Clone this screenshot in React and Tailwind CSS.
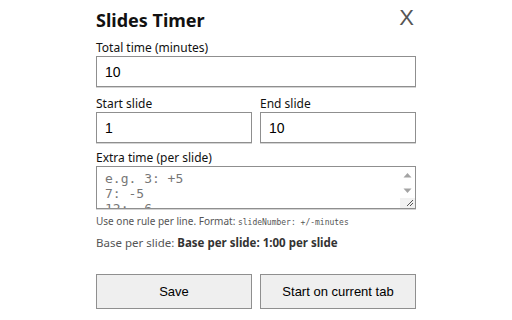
import { useState } from "react";

const App = () => {
  const [total, setTotal] = useState("10");
  const [start, setStart] = useState("1");
  const [end, setEnd] = useState("10");

  const inputCls =
    "w-full h-[31px] px-2 border border-[#8f8f8f] shadow-[0_1px_0_#d4d4d4] text-[14px] text-black outline-none bg-white [font-family:'Liberation_Sans',Arial,sans-serif]";

  return (
    <div className="w-[512px] h-[320px] bg-white [font-family:'Noto_Sans',sans-serif] text-[#111]">
      <div className="w-[320px] mx-auto pt-[7px]">
        {/* HEADER */}
        <div className="flex items-start justify-between">
          <h1 className="text-[18px] font-bold leading-[26px]">Slides Timer</h1>
          <button className="text-[22px] leading-[22px] font-light text-[#555] pr-[2px] [font-family:'Liberation_Sans',sans-serif]">
            X
          </button>
        </div>

        {/* TOTAL */}
        <label className="block mt-[6px] text-[12px] leading-[17px]">Total time (minutes)</label>
        <input className={inputCls} value={total} onChange={e => setTotal(e.target.value)} />

        {/* SLIDES */}
        <div className="grid grid-cols-2 gap-2 mt-[8px]">
          <div>
            <label className="block text-[12px] leading-[17px]">Start slide</label>
            <input className={inputCls} value={start} onChange={e => setStart(e.target.value)} />
          </div>
          <div>
            <label className="block text-[12px] leading-[17px]">End slide</label>
            <input className={inputCls} value={end} onChange={e => setEnd(e.target.value)} />
          </div>
        </div>

        {/* EXTRA */}
        <label className="block mt-[6px] text-[12px] leading-[17px]">Extra time (per slide)</label>
        <div className="flex h-[43px] border border-[#8f8f8f] shadow-[0_1px_0_#d4d4d4] bg-white">
          <textarea
            rows={2}
            className="flex-1 resize-none px-2 pt-[4px] text-[13px] leading-[15px] overflow-hidden outline-none placeholder:text-[#777] [font-family:'DejaVu_Sans_Mono',monospace]"
            placeholder={"e.g. 3: +5\n7: -5\n12: -6"}
          />
          {/* scrollbar */}
          <div className="w-[15px] flex flex-col items-center bg-white">
            <svg width="15" height="15" viewBox="0 0 15 15" className="mt-[1px]">
              <path d="M3.5 9.5 L7.5 5 L11.5 9.5 Z" fill="#a3a3a3" />
            </svg>
            <svg width="15" height="15" viewBox="0 0 15 15">
              <path d="M3.5 5.5 L7.5 10 L11.5 5.5 Z" fill="#a3a3a3" />
            </svg>
            <div className="flex-1" />
            <div className="w-[15px] h-[10px] bg-[#f1f1f1] flex items-end justify-end">
              <svg width="8" height="8" viewBox="0 0 8 8" className="mb-[1px] mr-[1px]">
                <path d="M7 1 L1 7 M7 4 L4 7" stroke="#555" strokeWidth="1" />
              </svg>
            </div>
          </div>
        </div>
        <p className="mt-[5px] text-[10px] leading-[14px] text-[#555]">
          Use one rule per line. Format:{" "}
          <code className="text-[8px] [font-family:'DejaVu_Sans_Mono',monospace]">slideNumber: +/-minutes</code>
        </p>
        <p className="mt-[5px] text-[11.5px] leading-[16px] text-[#555]">
          Base per slide: <span className="font-bold text-[#333]">Base per slide: 1:00 per slide</span>
        </p>

        {/* ACTIONS */}
        <div className="grid grid-cols-2 gap-2 mt-[23px]">
          <button className="h-[35px] bg-[#efefef] border border-[#8f8f8f] text-[13px] text-black [font-family:'Liberation_Sans',Arial,sans-serif]">
            Save
          </button>
          <button className="h-[35px] bg-[#efefef] border border-[#8f8f8f] text-[13px] text-black [font-family:'Liberation_Sans',Arial,sans-serif]">
            Start on current tab
          </button>
        </div>
      </div>
    </div>
  );
};

export default App;
